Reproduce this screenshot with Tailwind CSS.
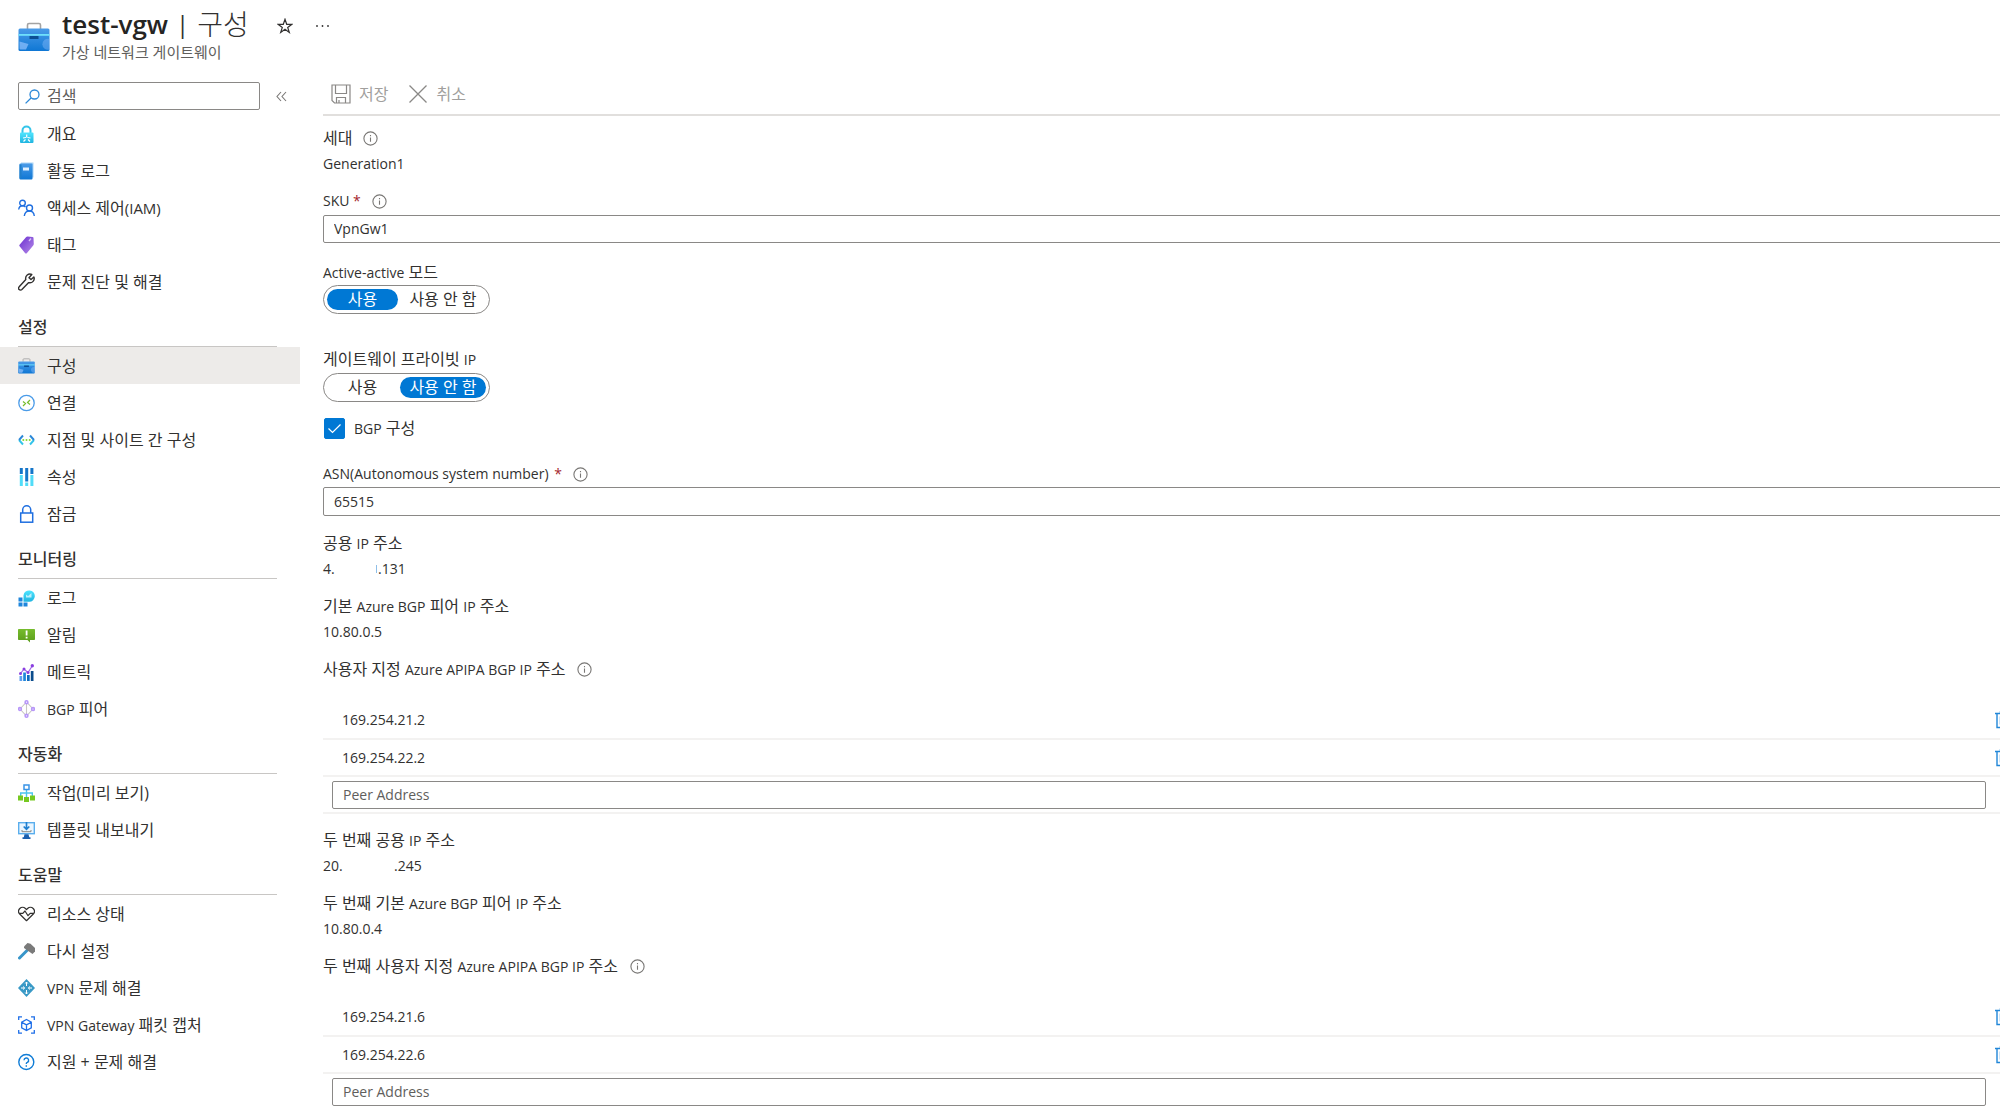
<!DOCTYPE html>
<html lang="ko">
<head>
  <meta charset="UTF-8" />
  <meta name="viewport" content="width=device-width, initial-scale=1.0"/>
  <title>test-vgw | 구성</title>
  <script src="https://cdn.jsdelivr.net/npm/@tailwindcss/browser@4"></script>
</head>
<body class="h-screen overflow-hidden bg-white font-['Open_Sans','Noto_Sans_CJK_KR',sans-serif] text-base text-[#323130] flex flex-col">

  <!-- Shared icons -->
  <svg class="absolute w-0 h-0" aria-hidden="true">
    <defs>
      <linearGradient id="blue" x1="0" y1="0" x2="0" y2="1"><stop offset="0" stop-color="#4a9be8"/><stop offset="1" stop-color="#0f77d4"/></linearGradient>
      <linearGradient id="cyan" x1="0" y1="0" x2="0" y2="1"><stop offset="0" stop-color="#50e6ff"/><stop offset="1" stop-color="#1fb4e0"/></linearGradient>
      <linearGradient id="purple" x1="0" y1="0" x2="1" y2="1"><stop offset="0" stop-color="#6a2ed0"/><stop offset="1" stop-color="#b58be8"/></linearGradient>
      <linearGradient id="green" x1="0" y1="0" x2="0" y2="1"><stop offset="0" stop-color="#76bc2d"/><stop offset="1" stop-color="#5c9d1c"/></linearGradient>
    </defs>
    <symbol id="info" viewBox="0 0 15 15">
      <circle cx="7.5" cy="7.5" r="6.6" fill="none" stroke="#797775" stroke-width="1.1"/>
      <path d="M7.5 6.5v4.3M7.5 4.1v1.2" stroke="#797775" stroke-width="1.1"/>
    </symbol>
    <symbol id="toolbox" viewBox="0 0 32 30">
      <path d="M9.500 7V3a1.500 1.500 0 0 1 1.500-1.500h10a1.500 1.500 0 0 1 1.500 1.500v4" fill="none" stroke="#a3a3a3" stroke-width="1.600"/>
      <rect x="0.500" y="6.500" width="31" height="22.500" rx="1.500" fill="url(#blue)"/>
      <path d="M1.500 19.500l9 2.500-2.500 5.500H2.500a1 1 0 0 1-1-1z" fill="#83b9f9" opacity=".8"/>
      <path d="M31.500 17a5.500 5.500 0 1 0 0 10.500z" fill="#83b9f9" opacity=".45"/>
      <path d="M0.500 12h31v1.800h-31z" fill="#6fe0fb"/>
      <rect x="11.500" y="14" width="9" height="3" fill="#0c4f94"/>
    </symbol>
    <symbol id="trash" viewBox="0 0 16 18">
      <path d="M0 2.500h16M5.500 2.500v-2h5v2M2 2.500v14h12v-14" fill="none" stroke="#2287d8" stroke-width="1.400"/>
      <path d="M5 5.500v8M8 5.500v8M11 5.500v8" stroke="#9ccbf0" stroke-width="1"/>
    </symbol>
  </svg>

  <!-- Header -->
  <header class="h-[76px] shrink-0 flex items-start pl-[18px] pt-2">
    <svg class="w-8 h-[30px] mt-3.5 mr-3" aria-hidden="true"><use href="#toolbox"/></svg>
    <div>
      <div class="flex items-center h-9">
        <h1 class="flex items-center gap-2 leading-8 pb-1 whitespace-nowrap"><span class="text-[26px] font-semibold text-[#252423]">test-vgw</span><span class="text-2xl">|</span><span class="text-[28px] font-light">구성</span></h1>
        <button type="button" aria-label="즐겨찾기" class="ml-7">
          <svg class="w-4 h-4" viewBox="0 0 16 16" fill="none" stroke="#323130" stroke-width="1.200"><path d="M8 1.300l1.700 5h5.200l-4.200 3.100 1.600 5L8 11.300l-4.300 3.100 1.600-5L1.100 6.300h5.200z"/></svg>
        </button>
        <button type="button" aria-label="더 보기" class="ml-[22px]">
          <svg class="w-[15px] h-4" viewBox="0 0 15 16" fill="#323130"><circle cx="2" cy="8" r=".9"/><circle cx="7.500" cy="8" r=".9"/><circle cx="13" cy="8" r=".9"/></svg>
        </button>
      </div>
      <p class="text-[15px] leading-4 text-[#605e5c]">가상 네트워크 게이트웨이</p>
    </div>
  </header>

  <div class="flex flex-1 min-h-0">

    <!-- Sidebar -->
    <aside class="w-[300px] shrink-0">
      <div class="flex items-center h-[39px] pt-1.5 pb-[5px] pl-[18px]">
        <label class="flex items-center w-[242px] h-7 border border-[#8a8886] rounded-xs px-1.5">
          <svg class="w-[15px] h-[15px] shrink-0" viewBox="0 0 15 15" fill="none" stroke="#2b88d8" stroke-width="1.300"><circle cx="9.500" cy="5.500" r="4.500"/><path d="M6.300 8.700L.6 14.400"/></svg>
          <input type="text" aria-label="검색" placeholder="검색" class="ml-[7px] w-full outline-none placeholder:text-[#605e5c]"/>
        </label>
        <button type="button" aria-label="메뉴 축소" class="ml-4">
          <svg class="w-[11px] h-3" viewBox="0 0 11 12" fill="none" stroke="#797775" stroke-width="1.100"><path d="M5 2L1 6.500 5 11M10 2L6 6.500l4 4.500"/></svg>
        </button>
      </div>

      <nav>
        <ul>
          <li><a href="#" class="flex items-center gap-3 h-[37px] pl-[18px] hover:bg-[#f3f2f1]">
            <svg class="w-[17px] h-[18px]" viewBox="0 0 17 18"><path d="M4.500 8V5.500a4 4 0 0 1 8 0V8" fill="none" stroke="#35c5ea" stroke-width="2"/><rect x="2" y="7.500" width="13.500" height="10.500" rx="1" fill="url(#cyan)"/><path d="M8.700 9.500v3M5 13l3-.5M12.500 13l-3-.5M5.500 16.500l2-2M12 16.500l-2-2" stroke="#fff" stroke-width="1.200"/></svg>
            개요</a></li>
          <li><a href="#" class="flex items-center gap-3 h-[37px] pl-[18px] hover:bg-[#f3f2f1]">
            <svg class="w-[17px] h-[18px]" viewBox="0 0 17 18"><path d="M3 .5h12.500v15H3z" fill="#a9d3f5"/><rect x="1.500" y="1.500" width="13" height="16" rx="1" fill="url(#blue)"/><path d="M1.500 2.500h2v14h-2z" fill="#1f7ecb"/><rect x="5" y="5.500" width="6" height="3" fill="#dff0ff"/></svg>
            활동 로그</a></li>
          <li><a href="#" class="flex items-center gap-3 h-[37px] pl-[18px] hover:bg-[#f3f2f1]">
            <svg class="w-[17px] h-[18px]" viewBox="0 0 17 18" fill="none" stroke="#1f6fe0" stroke-width="1.400"><circle cx="4.500" cy="4" r="2.800"/><circle cx="11.500" cy="9" r="3"/><path d="M.7 10.500c.3-2.500 2-3.700 4-3.700 1.200 0 2 .4 2.800 1.200M6.300 17c.4-3.200 2.500-5 5-5s4.700 1.800 5 5"/></svg>
            <span>액세스 제어<span class="text-[15px]">(IAM)</span></span></a></li>
          <li><a href="#" class="flex items-center gap-3 h-[37px] pl-[18px] hover:bg-[#f3f2f1]">
            <svg class="w-[17px] h-[18px]" viewBox="0 0 17 18"><path d="M9.500.5l5 .5a1 1 0 0 1 1 1l.3 6a2 2 0 0 1-.6 1.500L9 17a1.400 1.400 0 0 1-2 0L1.800 10.500a1.400 1.400 0 0 1 0-2L8 1.200A2 2 0 0 1 9.500.5z" fill="url(#purple)"/><path d="M11 5l2-2.500" stroke="#d9c4f7" stroke-width="1.300"/></svg>
            태그</a></li>
          <li><a href="#" class="flex items-center gap-3 h-[37px] pl-[18px] hover:bg-[#f3f2f1]">
            <svg class="w-[17px] h-[18px]" viewBox="0 0 17 18" fill="none" stroke="#323130" stroke-width="1.400" stroke-linejoin="round"><path d="M13.800 1.500a4.300 4.300 0 0 0-6 5L1.200 13.800a1.900 1.900 0 0 0 2.700 2.800l6.800-7a4.300 4.300 0 0 0 5.200-5.700L13 6.600l-2-1.800z"/></svg>
            문제 진단 및 해결</a></li>
        </ul>

        <h2 class="h-[47px] ml-[18px] mr-[23px] pt-2 flex items-center font-medium border-b border-[#c8c6c4]">설정</h2>
        <ul>
          <li><a href="#" aria-current="page" class="flex items-center gap-3 h-[37px] pl-[18px] bg-[#edebe9]">
            <svg class="w-[17px] h-[18px]"><use href="#toolbox"/></svg>
            구성</a></li>
          <li><a href="#" class="flex items-center gap-3 h-[37px] pl-[18px] hover:bg-[#f3f2f1]">
            <svg class="w-[17px] h-[18px]" viewBox="0 0 17 18" fill="none"><circle cx="8.500" cy="9" r="7.700" stroke="#4a9be8" stroke-width="1.300"/><path d="M5 7.500l2.500 2L5 12M12 6L9.500 8.500 12 10.500" stroke="#76bc2d" stroke-width="1.200"/></svg>
            연결</a></li>
          <li><a href="#" class="flex items-center gap-3 h-[37px] pl-[18px] hover:bg-[#f3f2f1]">
            <svg class="w-[17px] h-[18px]" viewBox="0 0 17 18" fill="none" stroke-width="1.900"><path d="M1 9l4 4.500M12 13.500L16 9" stroke="#35c5ea"/><path d="M5 4.500L1 9M12 4.500L16 9" stroke="#2b88d8"/><g fill="#86d633"><circle cx="5.300" cy="9" r="1"/><circle cx="8.500" cy="9" r="1"/><circle cx="11.700" cy="9" r="1"/></g></svg>
            지점 및 사이트 간 구성</a></li>
          <li><a href="#" class="flex items-center gap-3 h-[37px] pl-[18px] hover:bg-[#f3f2f1]">
            <svg class="w-[17px] h-[18px]" viewBox="0 0 17 18"><path d="M1.800 0h3v6h-3zM7.200 0h3v13.500h-3zM12.400 0h3v6h-3z" fill="#1475c9"/><path d="M1.800 7h3v11h-3zM7.200 14.500h3V18h-3zM12.400 7h3v11h-3z" fill="#50dcf8"/></svg>
            속성</a></li>
          <li><a href="#" class="flex items-center gap-3 h-[37px] pl-[18px] hover:bg-[#f3f2f1]">
            <svg class="w-[17px] h-[18px]" viewBox="0 0 17 18" fill="none" stroke="#1f6fe0" stroke-width="1.500"><rect x="2.700" y="8" width="12" height="9.200"/><path d="M4.700 8V4.800a4 4 0 0 1 8 0V8"/></svg>
            잠금</a></li>
        </ul>

        <h2 class="h-[47px] ml-[18px] mr-[23px] pt-2 flex items-center font-medium border-b border-[#c8c6c4]">모니터링</h2>
        <ul>
          <li><a href="#" class="flex items-center gap-3 h-[37px] pl-[18px] hover:bg-[#f3f2f1]">
            <svg class="w-[17px] h-[18px]" viewBox="0 0 17 18"><path d="M.5 8.500h4v4h-4zM.5 13.500h4v4h-4zM5.500 13.500h4v4h-4z" fill="#1f86dc"/><path d="M5.500 12.800V6.200a5.700 5.700 0 1 1 5.700 6.600z" fill="url(#cyan)"/><path d="M8 8.500V5.500l2 1.500 3.500-3v4.500z" fill="#dff7ff" opacity=".8"/></svg>
            로그</a></li>
          <li><a href="#" class="flex items-center gap-3 h-[37px] pl-[18px] hover:bg-[#f3f2f1]">
            <svg class="w-[17px] h-[18px]" viewBox="0 0 17 18"><path d="M.8 3h15.400a.8.800 0 0 1 .8.800v9.400a.8.800 0 0 1-.8.800H12v2.500L9.500 14H.8a.8.800 0 0 1-.8-.8V3.800A.8.800 0 0 1 .8 3z" fill="url(#green)"/><path d="M7.700 4.500h1.800v5H7.700zM7.700 10.700h1.800v1.800H7.700z" fill="#fff"/></svg>
            알림</a></li>
          <li><a href="#" class="flex items-center gap-3 h-[37px] pl-[18px] hover:bg-[#f3f2f1]">
            <svg class="w-[17px] h-[18px]" viewBox="0 0 17 18"><path d="M1.500 13h2.700v5H1.500z" fill="#5ea0ef"/><path d="M5.200 9.500h2.700V18H5.200z" fill="#1f86dc"/><path d="M9 12h2.700v6H9z" fill="#0f6bbf"/><path d="M12.800 8h2.700v10h-2.700z" fill="#0b4c8c"/><path d="M2.500 10.500L6 6l4 3.500 4.500-7" fill="none" stroke="#a067e8" stroke-width="1.200"/><g fill="#8a3fe0"><circle cx="2.500" cy="10.500" r="1.500"/><circle cx="6" cy="6" r="1.500"/><circle cx="10" cy="9.500" r="1.500"/><circle cx="14.300" cy="2.700" r="1.700"/></g></svg>
            메트릭</a></li>
          <li><a href="#" class="flex items-center gap-3 h-[37px] pl-[18px] hover:bg-[#f3f2f1]">
            <svg class="w-[17px] h-[18px]" viewBox="0 0 17 18" fill="none"><path d="M8.500 2L2 9l6.500 7L15 9zM8.500 2v14" stroke="#c8c6c4" stroke-width="1.100"/><g fill="#fff" stroke="#b796f9" stroke-width="1.600"><circle cx="8.500" cy="2.200" r="1.400"/><circle cx="2" cy="9" r="1.400"/><circle cx="15" cy="9" r="1.400"/><circle cx="8.500" cy="15.800" r="1.400"/></g></svg>
            <span><span class="text-sm">BGP</span> 피어</span></a></li>
        </ul>

        <h2 class="h-[47px] ml-[18px] mr-[23px] pt-2 flex items-center font-medium border-b border-[#c8c6c4]">자동화</h2>
        <ul>
          <li><a href="#" class="flex items-center gap-3 h-[37px] pl-[18px] hover:bg-[#f3f2f1]">
            <svg class="w-[17px] h-[18px]" viewBox="0 0 17 18"><path d="M8.500 6v7M2.700 12V9h11.600v3" fill="none" stroke="#4bc4ee" stroke-width="1.400"/><rect x="6" y="1" width="5" height="4.500" fill="#fff" stroke="#3a94e6" stroke-width="1.500"/><path d="M0 11.500h5v5H0zM6 13h5v5H6zM12 11.500h5v5h-5z" fill="#76c920"/></svg>
            작업(미리 보기)</a></li>
          <li><a href="#" class="flex items-center gap-3 h-[37px] pl-[18px] hover:bg-[#f3f2f1]">
            <svg class="w-[17px] h-[18px]" viewBox="0 0 17 18"><rect x=".7" y="1.700" width="15.600" height="11" fill="#eaf6ff" stroke="#5aaeed" stroke-width="1.400"/><path d="M8.500 1v7M5.700 5.500l2.800 2.800 2.800-2.800" fill="none" stroke="#1f7fd0" stroke-width="1.700"/><path d="M4 9v1.700h9V9" fill="none" stroke="#8a8886" stroke-width="1"/><path d="M6.500 13.300h4l.8 3h1.200V18h-8v-1.700h1.300z" fill="#1b5fae"/></svg>
            템플릿 내보내기</a></li>
        </ul>

        <h2 class="h-[47px] ml-[18px] mr-[23px] pt-2 flex items-center font-medium border-b border-[#c8c6c4]">도움말</h2>
        <ul>
          <li><a href="#" class="flex items-center gap-3 h-[37px] pl-[18px] hover:bg-[#f3f2f1]">
            <svg class="w-[17px] h-[18px]" viewBox="0 0 17 18" fill="none" stroke="#323130" stroke-width="1.200" stroke-linejoin="round"><path d="M8.500 15.700L1.700 9A4 4 0 0 1 1.800 3.500a4 4 0 0 1 5.600 0L8.500 4.600l1.100-1.100a4 4 0 0 1 5.600 0A4 4 0 0 1 15.300 9z"/><path d="M1.500 8.300h3.300L7 6l3 4.700 2.200-2.400h3.300"/></svg>
            리소스 상태</a></li>
          <li><a href="#" class="flex items-center gap-3 h-[37px] pl-[18px] hover:bg-[#f3f2f1]">
            <svg class="w-[17px] h-[18px]" viewBox="0 0 17 18"><path d="M9.500 8L1.500 16" stroke="#3795c9" stroke-width="3" stroke-linecap="round"/><path d="M6 4.500L9.500 1l3 .8L17 6v3.500L14.500 12 6 6z" fill="#7a7a7a"/></svg>
            다시 설정</a></li>
          <li><a href="#" class="flex items-center gap-3 h-[37px] pl-[18px] hover:bg-[#f3f2f1]">
            <svg class="w-[17px] h-[18px]" viewBox="0 0 17 18"><path d="M8.500 0L17 9l-8.500 9L0 9z" fill="#3999c6"/><path d="M8.500 3v4M8.500 11v4M3 9h3.500M10.500 9H14M7.200 4.500L8.500 3l1.300 1.500M7.200 13.500L8.500 15l1.300-1.500M5 7.500L6.700 9 5 10.500M12 7.500L10.300 9l1.700 1.500" fill="none" stroke="#fff" stroke-width="1"/></svg>
            <span><span class="text-sm">VPN</span> 문제 해결</span></a></li>
          <li><a href="#" class="flex items-center gap-3 h-[37px] pl-[18px] hover:bg-[#f3f2f1]">
            <svg class="w-[17px] h-[18px]" viewBox="0 0 17 18" fill="none" stroke="#1f6fe8" stroke-width="1.300"><path d="M.7 4V.8H4M13 .8h3.300V4M.7 14v3.200H4M13 17.200h3.300V14M8.500 3.500l4.800 2.700v5.600l-4.800 2.700-4.800-2.700V6.200zM3.700 6.200l4.800 2.700 4.800-2.700M8.500 8.900v5.600"/></svg>
            <span><span class="text-sm">VPN Gateway</span> 패킷 캡처</span></a></li>
          <li><a href="#" class="flex items-center gap-3 h-[37px] pl-[18px] hover:bg-[#f3f2f1]">
            <svg class="w-[17px] h-[18px]" viewBox="0 0 17 18" fill="none" stroke="#0f7cd6" stroke-width="1.400"><circle cx="8.300" cy="9" r="7.500"/><path d="M6 7.300a2.300 2.300 0 1 1 3.300 2.100c-.7.300-1 .7-1 1.600M8.300 12.300v1.400"/></svg>
            지원 + 문제 해결</a></li>
        </ul>
      </nav>
    </aside>

    <!-- Main -->
    <main class="flex-1 min-w-0 overflow-hidden pl-[23px]">
      <div class="flex items-center h-10 pl-2 pb-0.5 border-b-2 border-[#e1dfdd] text-[#a19f9d]">
        <button type="button" disabled class="flex items-center gap-2">
          <svg class="w-5 h-5" viewBox="0 0 20 20" fill="none" stroke="#8a8886" stroke-width="1.200"><path d="M1 1h18v18H3.500L1 16.500zM4.500 1v8.500h11V1M5.500 19v-5.500h9V19M8 19v-3"/></svg>
          저장
        </button>
        <button type="button" disabled class="flex items-center gap-2 ml-5">
          <svg class="w-5 h-5" viewBox="0 0 20 20" fill="none" stroke="#8a8886" stroke-width="1.300"><path d="M1.500 1.500l17 17M18.500 1.500l-17 17"/></svg>
          취소
        </button>
      </div>

      <form class="pt-[9px]">
        <dl class="mb-[11px]">
          <dt class="flex items-center gap-[11px] h-[26px]">세대 <svg class="w-[15px] h-[15px]"><use href="#info"/></svg></dt>
          <dd class="h-[26px] text-sm leading-[26px]">Generation1</dd>
        </dl>

        <div class="flex items-center h-[26px] text-sm">
          <label for="sku">SKU <span class="text-[#a4262c]">*</span></label>
          <svg class="w-[15px] h-[15px] ml-[11px]"><use href="#info"/></svg>
        </div>
        <select id="sku" class="block mt-px w-[calc(100%+16px)] h-7 appearance-none border border-[#8a8886] rounded-xs px-2.5 text-sm">
          <option>VpnGw1</option>
        </select>

        <fieldset class="mt-4">
          <legend class="h-[26px] leading-[26px]"><span class="text-sm">Active-active</span> 모드</legend>
          <div class="inline-flex h-[29px] border border-[#8a8886] rounded-full p-[3px] gap-0.5 align-top">
            <label class="w-[71px] rounded-full text-center leading-5 has-checked:bg-[#0078d4] has-checked:text-white"><input type="radio" name="active" checked class="sr-only"/>사용</label>
            <label class="w-[86px] rounded-full text-center leading-5 has-checked:bg-[#0078d4] has-checked:text-white"><input type="radio" name="active" class="sr-only"/>사용 안 함</label>
          </div>
        </fieldset>

        <fieldset class="mt-8">
          <legend class="h-[26px] leading-[26px]">게이트웨이 프라이빗 <span class="text-sm">IP</span></legend>
          <div class="inline-flex mt-px h-[29px] border border-[#8a8886] rounded-full p-[3px] gap-0.5 align-top">
            <label class="w-[71px] rounded-full text-center leading-5 has-checked:bg-[#0078d4] has-checked:text-white"><input type="radio" name="private" class="sr-only"/>사용</label>
            <label class="w-[86px] rounded-full text-center leading-5 has-checked:bg-[#0078d4] has-checked:text-white"><input type="radio" name="private" checked class="sr-only"/>사용 안 함</label>
          </div>
        </fieldset>

        <div class="flex items-center h-[26px] mt-[13px] pl-px">
          <span class="relative flex">
            <input id="bgp" type="checkbox" checked class="peer appearance-none w-[21px] h-[21px] rounded-xs border border-[#323130] checked:bg-[#0078d4] checked:border-[#0078d4]"/>
            <svg class="absolute inset-0 w-[21px] h-[21px] hidden peer-checked:block pointer-events-none" viewBox="0 0 21 21" fill="none" stroke="#fff" stroke-width="1.200"><path d="M4.500 10.500l4 4 8-8"/></svg>
          </span>
          <label for="bgp" class="ml-[9px]"><span class="text-sm">BGP</span> 구성</label>
        </div>

        <div class="flex items-center h-[26px] mt-5 text-sm">
          <label for="asn">ASN(Autonomous system number) <span class="text-[#a4262c] ml-0.5">*</span></label>
          <svg class="w-[15px] h-[15px] ml-[11px]"><use href="#info"/></svg>
        </div>
        <input id="asn" type="text" value="65515" class="block w-[calc(100%+16px)] h-[29px] border border-[#8a8886] rounded-xs px-2.5 text-sm outline-none"/>

        <!-- First instance -->
        <dl class="mt-3.5">
          <dt class="h-[26px] leading-[26px]">공용 <span class="text-sm">IP</span> 주소</dt>
          <dd class="h-[26px] text-sm leading-[26px] mb-[11px] flex items-center"><span class="w-[53px]">4.</span><span class="w-px h-2 mr-px bg-[#8fbfe8]"></span><span>.131</span></dd>
          <dt class="h-[26px] leading-[26px]">기본 <span class="text-sm">Azure BGP</span> 피어 <span class="text-sm">IP</span> 주소</dt>
          <dd class="h-[26px] text-sm leading-[26px] mb-[11px]">10.80.0.5</dd>
        </dl>
        <div class="flex items-center gap-3 h-[26px]">
          <h3 id="apipa1">사용자 지정 <span class="text-sm">Azure APIPA BGP IP</span> 주소</h3>
          <svg class="w-[15px] h-[15px]"><use href="#info"/></svg>
        </div>
        <table aria-labelledby="apipa1" class="mt-5 w-[calc(100%+16px)] table-fixed text-sm">
          <tbody>
            <tr class="h-[37px] border-b-2 border-[#f3f2f1]">
              <td class="pl-[19px]">169.254.21.2</td>
              <td class="w-[21px]"><button type="button" aria-label="삭제" class="block"><svg class="w-4 h-[18px]"><use href="#trash"/></svg></button></td>
            </tr>
            <tr class="h-[37px] border-b-2 border-[#f3f2f1]">
              <td class="pl-[19px]">169.254.22.2</td>
              <td><button type="button" aria-label="삭제" class="block"><svg class="w-4 h-[18px]"><use href="#trash"/></svg></button></td>
            </tr>
            <tr class="h-[37px] border-b-2 border-[#f3f2f1]">
              <td class="pl-[9px] pr-[9px]"><input type="text" aria-label="Peer Address" placeholder="Peer Address" class="block w-full h-7 border border-[#8a8886] rounded-xs px-2.5 outline-none placeholder:text-[#605e5c]"/></td>
              <td></td>
            </tr>
          </tbody>
        </table>

        <!-- Second instance -->
        <dl class="mt-[13px]">
          <dt class="h-[26px] leading-[26px]">두 번째 공용 <span class="text-sm">IP</span> 주소</dt>
          <dd class="h-[26px] text-sm leading-[26px] mb-[11px] flex"><span class="w-[71px]">20.</span><span>.245</span></dd>
          <dt class="h-[26px] leading-[26px]">두 번째 기본 <span class="text-sm">Azure BGP</span> 피어 <span class="text-sm">IP</span> 주소</dt>
          <dd class="h-[26px] text-sm leading-[26px] mb-[11px]">10.80.0.4</dd>
        </dl>
        <div class="flex items-center gap-3 h-[26px]">
          <h3 id="apipa2">두 번째 사용자 지정 <span class="text-sm">Azure APIPA BGP IP</span> 주소</h3>
          <svg class="w-[15px] h-[15px]"><use href="#info"/></svg>
        </div>
        <table aria-labelledby="apipa2" class="mt-5 w-[calc(100%+16px)] table-fixed text-sm">
          <tbody>
            <tr class="h-[37px] border-b-2 border-[#f3f2f1]">
              <td class="pl-[19px]">169.254.21.6</td>
              <td class="w-[21px]"><button type="button" aria-label="삭제" class="block"><svg class="w-4 h-[18px]"><use href="#trash"/></svg></button></td>
            </tr>
            <tr class="h-[37px] border-b-2 border-[#f3f2f1]">
              <td class="pl-[19px]">169.254.22.6</td>
              <td><button type="button" aria-label="삭제" class="block"><svg class="w-4 h-[18px]"><use href="#trash"/></svg></button></td>
            </tr>
            <tr class="h-9">
              <td class="pl-[9px] pr-[9px]"><input type="text" aria-label="Peer Address" placeholder="Peer Address" class="block w-full h-7 border border-[#8a8886] rounded-xs px-2.5 outline-none placeholder:text-[#605e5c]"/></td>
              <td></td>
            </tr>
          </tbody>
        </table>
      </form>
    </main>
  </div>
</body>
</html>
